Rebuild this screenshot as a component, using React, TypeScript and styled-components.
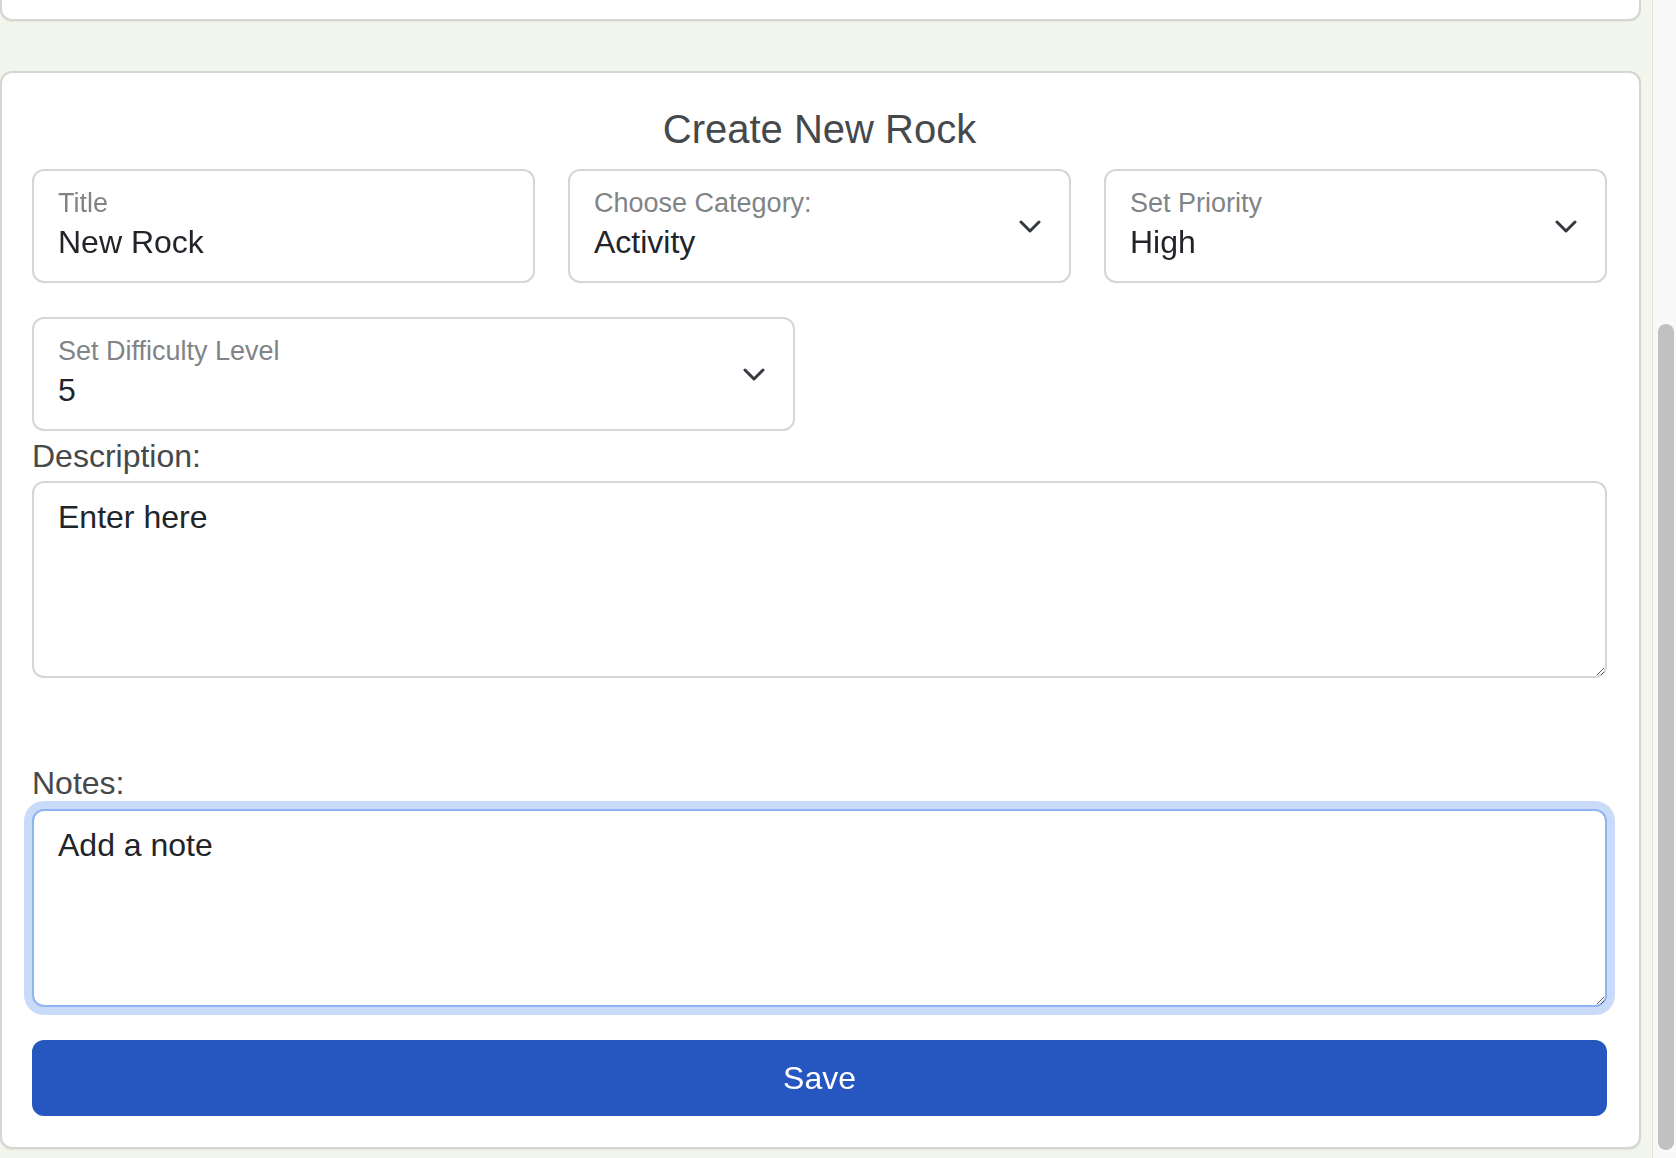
import React, { useEffect, useRef } from "react";
import styled, { createGlobalStyle, css } from "styled-components";

const GlobalStyle = createGlobalStyle`
  html, body {
    margin: 0;
    padding: 0;
    height: 100%;
    overflow: hidden;
    background: #f3f6ed;
    font-family: "Liberation Sans", Arial, Helvetica, sans-serif;
  }
  * { box-sizing: border-box; }
`;

const Page = styled.div`
  display: flex;
  width: 100%;
  height: 100vh;
`;

const Main = styled.div`
  flex: 1;
  display: flex;
  flex-direction: column;
  padding-right: 11px;
  min-width: 0;
`;

const TopCard = styled.div`
  height: 21px;
  background: #ffffff;
  border: 2px solid #d4d6d2;
  border-top: none;
  border-radius: 0 0 12px 12px;
  box-shadow: 0 1px 1px rgba(0, 0, 0, 0.06);
`;

const FormCard = styled.section`
  margin-top: 50px;
  background: #ffffff;
  border: 2px solid #d4d6d2;
  border-radius: 12px;
  box-shadow: 0 1px 2px rgba(0, 0, 0, 0.08);
  padding: 32px 32px 31px 30px;
  display: flex;
  flex-direction: column;
`;

const Heading = styled.h2`
  margin: 0 0 16px 0;
  font-size: 40px;
  line-height: 48px;
  font-weight: 500;
  color: #46494b;
  text-align: center;
`;

const Grid3 = styled.div`
  display: grid;
  grid-template-columns: repeat(3, 1fr);
  gap: 33px;
  margin-bottom: 34px;
`;

const FloatBox = styled.div<{ $width?: number; $mb?: number }>`
  position: relative;
  height: 114px;
  ${(p) => (p.$width ? `width: ${p.$width}px;` : "")}
  margin-bottom: ${(p) => p.$mb ?? 0}px;
  border: 2px solid #d3d7db;
  border-radius: 12px;
  background: #ffffff;
  padding: 16px 24px 0 24px;
  display: flex;
  flex-direction: column;
`;

const FloatLabel = styled.label`
  display: block;
  font-size: 27px;
  line-height: 32px;
  color: #818487;
  white-space: nowrap;
`;

const valueText = css`
  margin-top: 3px;
  height: 40px;
  width: 100%;
  padding: 0;
  border: none;
  outline: none;
  background: transparent;
  font-family: "Liberation Sans", Arial, Helvetica, sans-serif;
  font-size: 32px;
  line-height: 40px;
  color: #212529;
`;

const TextInput = styled.input`
  ${valueText}
`;

const Select = styled.select`
  ${valueText}
  appearance: none;
  -webkit-appearance: none;
  padding-right: 60px;
  cursor: pointer;
`;

const Chevron = styled.svg`
  position: absolute;
  right: 28px;
  top: 50%;
  margin-top: -6px;
  width: 22px;
  height: 13px;
  pointer-events: none;
`;

const FieldLabel = styled.label<{ $mb: number }>`
  display: block;
  font-size: 32px;
  line-height: 48px;
  color: #46494b;
  margin-bottom: ${(p) => p.$mb}px;
`;

const TextArea = styled.textarea<{ $focused?: boolean; $mb: number }>`
  display: block;
  width: 100%;
  height: ${(p) => (p.$focused ? 198 : 197)}px;
  margin: 0 0 ${(p) => p.$mb}px 0;
  padding: 10px 24px;
  border: 2px solid #d3d7db;
  border-radius: 12px;
  background: #ffffff;
  font-family: "Liberation Sans", Arial, Helvetica, sans-serif;
  font-size: 32px;
  line-height: 48px;
  color: #212529;
  caret-color: #212529;
  resize: vertical;
  outline: none;
  ${(p) =>
    p.$focused &&
    css`
      border-color: #8fb4f2;
      box-shadow: 0 0 0 8px #cadaf9;
    `}
`;

const SaveButton = styled.button`
  height: 76px;
  width: 100%;
  border: none;
  border-radius: 12px;
  background: #2657c1;
  color: #ffffff;
  font-family: "Liberation Sans", Arial, Helvetica, sans-serif;
  font-size: 32px;
  line-height: 48px;
  cursor: pointer;
`;

const ScrollTrack = styled.div`
  width: 24px;
  flex: 0 0 24px;
  background: #f9f9f9;
  border-left: 1px solid #e4e4e4;
  padding: 324px 2px 8px 5px;
  display: flex;
  flex-direction: column;
`;

const ScrollThumb = styled.div`
  width: 16px;
  height: 826px;
  border-radius: 8px;
  background: #c1c1c1;
`;

const ChevronIcon = () => (
  <Chevron viewBox="0 0 22 13" fill="none">
    <path
      d="M2 2 L11 11 L20 2"
      stroke="#343a40"
      strokeWidth="3"
      strokeLinecap="round"
      strokeLinejoin="round"
    />
  </Chevron>
);

export default function App() {
  const notesRef = useRef<HTMLTextAreaElement>(null);

  useEffect(() => {
    const el = notesRef.current;
    if (el) {
      el.focus();
      const len = el.value.length;
      el.setSelectionRange(len, len);
    }
  }, []);

  return (
    <>
      <GlobalStyle />
      <Page>
        <Main>
          <TopCard />
          <FormCard>
            <Heading>Create New Rock</Heading>
            <Grid3>
              <FloatBox>
                <FloatLabel htmlFor="title">Title</FloatLabel>
                <TextInput id="title" defaultValue="New Rock" />
              </FloatBox>
              <FloatBox>
                <FloatLabel htmlFor="category">Choose Category:</FloatLabel>
                <Select id="category" defaultValue="Activity">
                  <option>Activity</option>
                  <option>Health</option>
                  <option>Work</option>
                </Select>
                <ChevronIcon />
              </FloatBox>
              <FloatBox>
                <FloatLabel htmlFor="priority">Set Priority</FloatLabel>
                <Select id="priority" defaultValue="High">
                  <option>Low</option>
                  <option>Medium</option>
                  <option>High</option>
                </Select>
                <ChevronIcon />
              </FloatBox>
            </Grid3>
            <FloatBox $width={763} $mb={1}>
              <FloatLabel htmlFor="difficulty">Set Difficulty Level</FloatLabel>
              <Select id="difficulty" defaultValue="5">
                {[1, 2, 3, 4, 5, 6, 7, 8, 9, 10].map((n) => (
                  <option key={n} value={String(n)}>
                    {n}
                  </option>
                ))}
              </Select>
              <ChevronIcon />
            </FloatBox>
            <FieldLabel htmlFor="description" $mb={1}>
              Description:
            </FieldLabel>
            <TextArea id="description" defaultValue="Enter here" $mb={81} />
            <FieldLabel htmlFor="notes" $mb={2}>
              Notes:
            </FieldLabel>
            <TextArea
              id="notes"
              ref={notesRef}
              defaultValue="Add a note"
              $focused
              $mb={33}
            />
            <SaveButton type="button">Save</SaveButton>
          </FormCard>
        </Main>
        <ScrollTrack>
          <ScrollThumb />
        </ScrollTrack>
      </Page>
    </>
  );
}
